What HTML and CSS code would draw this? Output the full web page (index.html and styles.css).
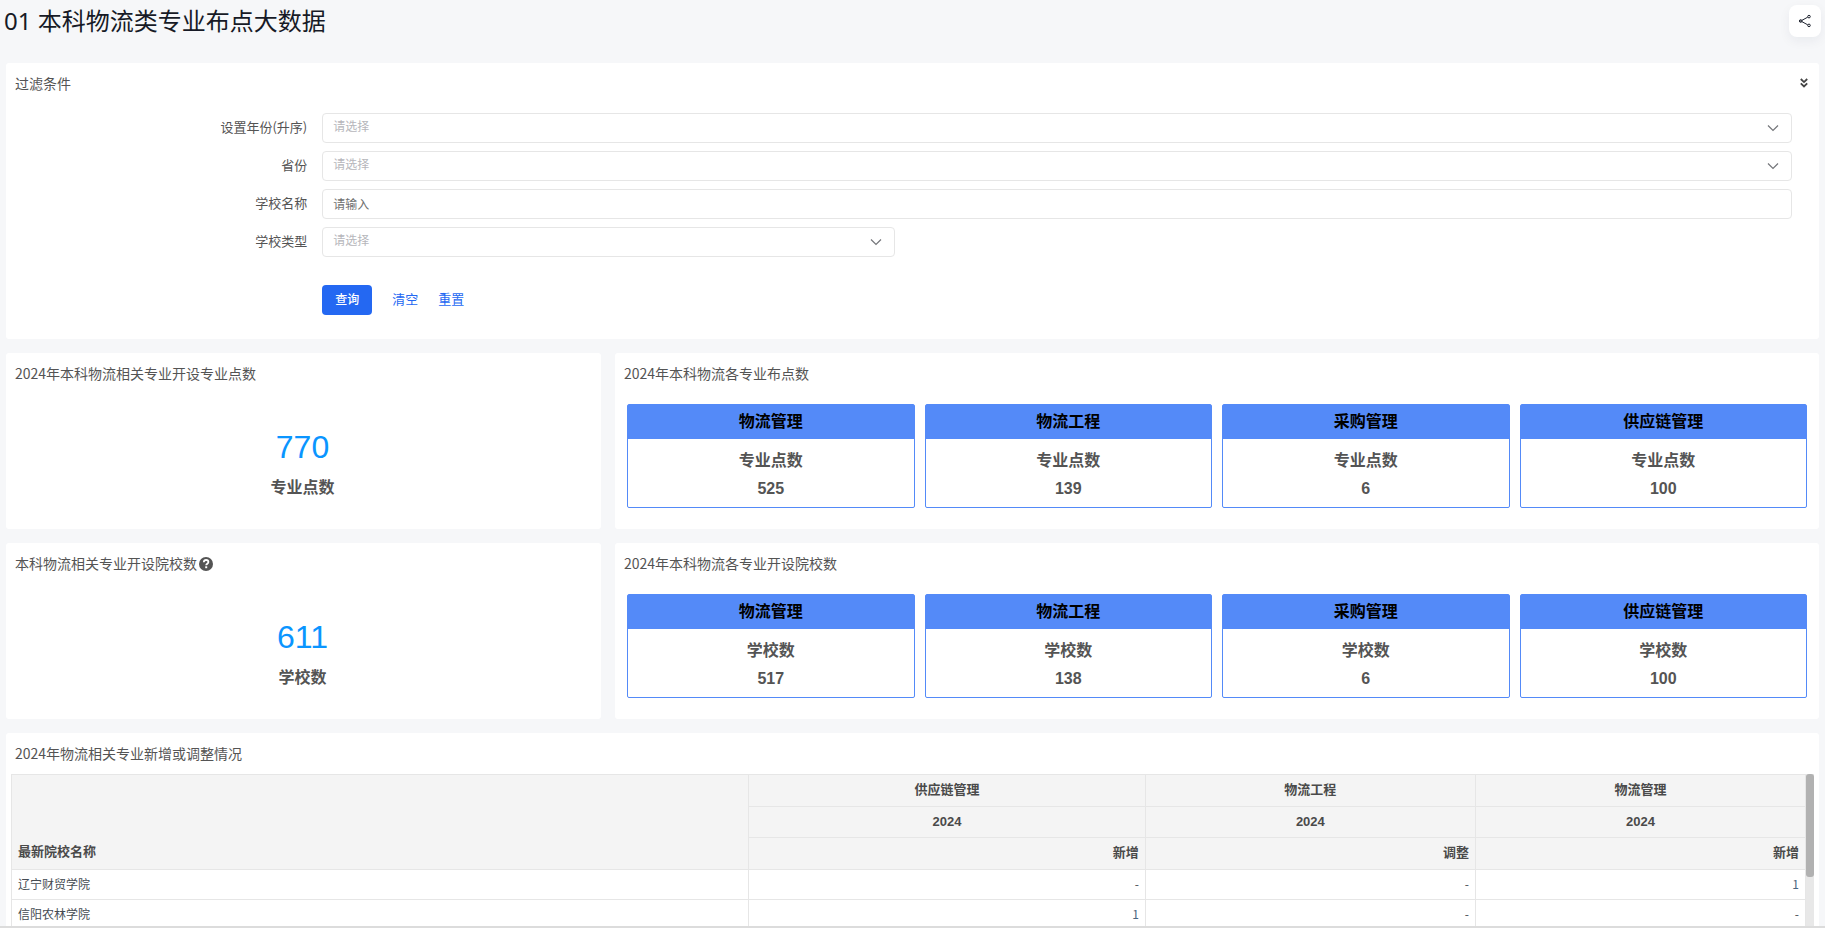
FILE: index.html
```html
<!DOCTYPE html>
<html lang="zh-CN">
<head>
<meta charset="utf-8">
<title>01 本科物流类专业布点大数据</title>
<meta name="viewport" content="width=device-width, initial-scale=1">
<link rel="stylesheet" href="styles.css">
</head>
<body>
<header class="page-header">
  <h1 class="page-title">01 本科物流类专业布点大数据</h1>
  <button class="share" type="button" aria-label="分享">
    <svg width="14" height="14" viewBox="0 0 14 14" fill="none" stroke="currentColor"><path d="M4 6.300 9.700 3.200M4 7.700 9.700 10.800"/><circle cx="2.700" cy="7" r="1.300" fill="#7a7e87"/><circle cx="11" cy="2.600" r="1.300"/><circle cx="11" cy="11.400" r="1.300"/></svg>
  </button>
</header>
<main class="dashboard">
  <section class="panel filter">
    <div class="filter-head">
      <h2 class="panel-title">过滤条件</h2>
      <button class="collapse" type="button" aria-label="展开">
        <svg width="8" height="10" viewBox="0 0 8 10" fill="none" stroke="currentColor" stroke-width="1.8"><path d="M.8 1 4 4.1 7.2 1M.8 5.4 4 8.5 7.2 5.4"/></svg>
      </button>
    </div>
    <form class="form">
      <label class="label" for="year">设置年份(升序)</label>
      <div class="field"><select class="control empty" id="year"><option>请选择</option></select><svg class="chevron" viewBox="0 0 12 8"><path d="M1 1.5 6 6.5 11 1.5"/></svg></div>
      <label class="label" for="province">省份</label>
      <div class="field"><select class="control empty" id="province"><option>请选择</option></select><svg class="chevron" viewBox="0 0 12 8"><path d="M1 1.5 6 6.5 11 1.5"/></svg></div>
      <label class="label" for="school">学校名称</label>
      <div class="field"><input class="control" id="school" type="text" placeholder="请输入"></div>
      <label class="label" for="type">学校类型</label>
      <div class="field field-short"><select class="control empty" id="type"><option>请选择</option></select><svg class="chevron" viewBox="0 0 12 8"><path d="M1 1.5 6 6.5 11 1.5"/></svg></div>
      <div class="actions">
        <button class="primary" type="submit">查询</button>
        <button class="text-button" type="reset">清空</button>
        <button class="text-button" type="button">重置</button>
      </div>
    </form>
  </section>

  <section class="panel">
    <h2 class="panel-title">2024年本科物流相关专业开设专业点数</h2>
    <div class="total"><span class="total-value">770</span><span class="total-name">专业点数</span></div>
  </section>
  <section class="panel wide">
    <h2 class="panel-title">2024年本科物流各专业布点数</h2>
    <div class="cards">
      <article class="card"><h3 class="card-head">物流管理</h3><p class="card-name">专业点数</p><p class="card-value">525</p></article>
      <article class="card"><h3 class="card-head">物流工程</h3><p class="card-name">专业点数</p><p class="card-value">139</p></article>
      <article class="card"><h3 class="card-head">采购管理</h3><p class="card-name">专业点数</p><p class="card-value">6</p></article>
      <article class="card"><h3 class="card-head">供应链管理</h3><p class="card-name">专业点数</p><p class="card-value">100</p></article>
    </div>
  </section>

  <section class="panel">
    <h2 class="panel-title">本科物流相关专业开设院校数<svg class="help" viewBox="0 0 14 14"><circle cx="7" cy="7" r="7" fill="currentColor"/><path d="M4.8 5.2C4.9 3.7 5.8 3 7.1 3s2.3.8 2.3 2c0 1.600-2.200 1.700-2.200 3.200" fill="none" stroke="#fff" stroke-width="1.800"/><path d="M6.200 9.300h2v1.900h-2z" fill="#fff"/></svg></h2>
    <div class="total"><span class="total-value">611</span><span class="total-name">学校数</span></div>
  </section>
  <section class="panel wide">
    <h2 class="panel-title">2024年本科物流各专业开设院校数</h2>
    <div class="cards">
      <article class="card"><h3 class="card-head">物流管理</h3><p class="card-name">学校数</p><p class="card-value">517</p></article>
      <article class="card"><h3 class="card-head">物流工程</h3><p class="card-name">学校数</p><p class="card-value">138</p></article>
      <article class="card"><h3 class="card-head">采购管理</h3><p class="card-name">学校数</p><p class="card-value">6</p></article>
      <article class="card"><h3 class="card-head">供应链管理</h3><p class="card-name">学校数</p><p class="card-value">100</p></article>
    </div>
  </section>

  <section class="panel table-panel">
    <h2 class="panel-title">2024年物流相关专业新增或调整情况</h2>
    <div class="table-area">
      <div class="table-view">
        <table class="table">
          <colgroup><col class="col-school"><col class="col-supply"><col class="col-major"><col class="col-major"></colgroup>
          <thead>
            <tr><th class="school" rowspan="3" scope="col">最新院校名称</th><th scope="col">供应链管理</th><th scope="col">物流工程</th><th scope="col">物流管理</th></tr>
            <tr><th class="year" scope="col">2024</th><th class="year" scope="col">2024</th><th class="year" scope="col">2024</th></tr>
            <tr><th class="num" scope="col">新增</th><th class="num" scope="col">调整</th><th class="num" scope="col">新增</th></tr>
          </thead>
          <tbody>
            <tr><td>辽宁财贸学院</td><td class="num">-</td><td class="num">-</td><td class="num"><a class="link" href="#">1</a></td></tr>
            <tr><td>信阳农林学院</td><td class="num"><a class="link" href="#">1</a></td><td class="num">-</td><td class="num">-</td></tr>
          </tbody>
        </table>
      </div>
      <div class="track"><div class="thumb"></div></div>
    </div>
  </section>
</main>
</body>
</html>
```
FILE: styles.css
```css
* { box-sizing: border-box; }

body {
  margin: 0;
  height: 100vh;
  display: flex;
  flex-direction: column;
  overflow: hidden;
  background: #f6f7f9;
  border-bottom: 2px solid #dcdcdc;
  color: #545454;
  font-family: "Noto Sans CJK SC", sans-serif;
  font-size: 13px;
}

h1, h2, h3, p { margin: 0; font-weight: 400; }
button, input, select { font-family: inherit; }
button { border: 0; padding: 0; background: none; cursor: pointer; }

.page-header {
  display: flex;
  justify-content: space-between;
  align-items: flex-start;
  height: 63px;
  padding: 5px 4px;
}

.page-title {
  color: #171a26;
  font-family: "Noto Sans", "Noto Sans CJK SC", sans-serif;
  font-size: 24px;
  line-height: 32px;
}

.share {
  display: grid;
  place-items: center;
  width: 32px;
  height: 32px;
  border-radius: 8px;
  background: #fff;
  box-shadow: 0 4px 12px rgba(20, 30, 60, .06);
  color: #1f2430;
}

.dashboard {
  flex: 1;
  min-height: 0;
  display: grid;
  grid-template-columns: repeat(3, minmax(0, 1fr));
  grid-template-rows: auto auto auto minmax(0, 1fr);
  gap: 14px;
  padding: 0 6px;
}

.panel {
  background: #fff;
  border-radius: 3px;
  padding: 9px 9px 21px;
}

.wide { grid-column: span 2; }
.filter, .table-panel { grid-column: 1 / -1; }
.filter { padding-bottom: 24px; }

.panel-title {
  font-size: 14px;
  line-height: 22px;
}

.filter-head { display: flex; justify-content: space-between; }

.collapse {
  width: 12px;
  height: 20px;
  color: #444;
}

.form {
  display: grid;
  grid-template-columns: 16.5% minmax(0, 1fr);
  gap: 8px 14px;
  align-items: center;
  padding: 19px 18px 0 0;
}

.label { padding: 0 1px 4px 0; text-align: right; }
.field { position: relative; }
.field-short { width: 39%; }

.control {
  display: block;
  width: 100%;
  height: 30px;
  padding: 0 10px 2px;
  border: 1px solid #e6e6e6;
  border-radius: 4px;
  background: #fff;
  color: #666;
  font-size: 12px;
  appearance: none;
}

.empty { padding-bottom: 5px; color: #b6b6bb; }
.control::placeholder { color: #6f6f6f; }

.chevron {
  position: absolute;
  right: 13px;
  top: 11px;
  width: 12px;
  height: 8px;
  fill: none;
  stroke: #74767a;
  stroke-width: 1.2;
  pointer-events: none;
}

.actions {
  grid-column: 2;
  display: flex;
  align-items: center;
  gap: 20px;
  padding-top: 20px;
}

.primary {
  width: 50px;
  height: 30px;
  padding-bottom: 3px;
  border-radius: 4px;
  background: #2468f2;
  color: #fff;
  font-size: 12px;
  font-weight: 500;
}

.text-button { padding-bottom: 4px; color: #2468f2; font-size: 13px; }

.help {
  width: 14px;
  height: 14px;
  margin-left: 2px;
  vertical-align: -2px;
}

.total {
  display: flex;
  flex-direction: column;
  align-items: center;
  padding: 41px 2px 0 0;
}

.total-value {
  color: #0a95ff;
  font-family: "Liberation Sans", sans-serif;
  font-size: 32px;
  line-height: 44px;
}

.total-name {
  font-size: 16px;
  font-weight: 700;
  line-height: 34px;
}

.cards {
  display: grid;
  grid-template-columns: repeat(4, minmax(0, 1fr));
  gap: 10px;
  padding: 20px 3px 0;
}

.card {
  padding-bottom: 3px;
  border: 1px solid #548af8;
  border-radius: 2px;
  font-size: 16px;
  font-weight: 700;
  text-align: center;
}

.card-head {
  margin-bottom: 6px;
  padding-bottom: 4px;
  background: #548af8;
  color: #000;
  font-size: 16px;
  font-weight: 700;
  line-height: 30px;
}

.card-name { font-weight: 700; line-height: 29px; }

.card-value {
  font-family: "Liberation Sans", sans-serif;
  font-weight: 700;
  line-height: 30px;
}

.table-panel { padding: 9px 5px 0; display: flex; flex-direction: column; min-height: 0; border-radius: 3px 3px 0 0; }
.table-panel .panel-title { padding-left: 4px; }

.table-area {
  flex: 1;
  min-height: 0;
  display: flex;
  margin-top: 10px;
}

.table-view { flex: 1; overflow: hidden; }

.table {
  width: 100%;
  border-collapse: collapse;
  table-layout: fixed;
}

.col-school { width: 41.1%; }
.col-supply { width: 22.1%; }

.table th, .table td {
  border: 1px solid #e6e6e6;
  padding: 0 6px 3px;
}

.table th {
  height: 32px;
  padding-bottom: 5px;
  background: #f4f4f4;
  color: #4a4a4a;
  font-family: "Liberation Sans", "Noto Sans CJK SC", sans-serif;
  font-size: 13px;
  font-weight: 700;
}

.table td {
  height: 30px;
  color: #454b52;
  font-size: 12px;
}

.table .year { height: 31px; padding-bottom: 2px; }
.table .school { text-align: left; vertical-align: bottom; padding-bottom: 9px; }
.table .num { text-align: right; }
.link { color: #4a6680; text-decoration: none; }

.track { width: 8px; background: #e8e8e8; }
.thumb { height: 103px; border-radius: 3px; background: #b1b1b1; }
```
